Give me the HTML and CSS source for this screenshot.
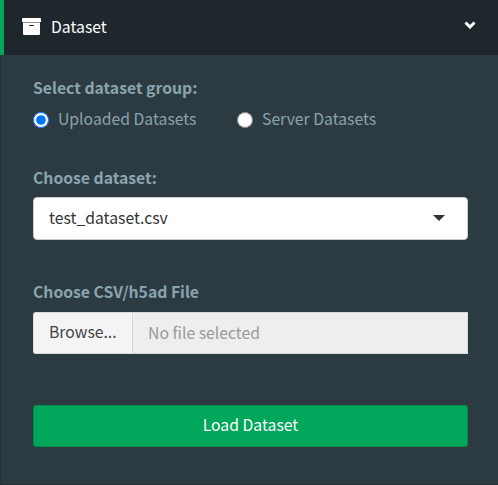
FILE: index.html
```html
<!DOCTYPE html>
<html lang="en">
<head>
<meta charset="utf-8">
<title>Dataset</title>
<link rel="stylesheet" href="styles.css">
</head>
<body>
<aside class="sidebar">
  <header class="menu-header">
    <svg class="archive" viewBox="0 0 19 17" aria-hidden="true"><path d="M1 0H18Q19 0 19 1V4H0V1Q0 0 1 0ZM1 4.4H18V16Q18 17 17 17H2Q1 17 1 16ZM7.5 7Q7 7 7 7.5Q7 8 7.5 8H11.5Q12 8 12 7.5Q12 7 11.5 7Z"/></svg>
    <span class="menu-title">Dataset</span>
    <svg class="chevron" viewBox="0 0 12 8" aria-hidden="true"><path d="M1.5 1.5L6 6L10.5 1.5"/></svg>
  </header>
  <form class="panel">
    <div class="label">Select dataset group:</div>
    <div class="radios">
      <label class="radio"><input type="radio" name="group" checked><span>Uploaded Datasets</span></label>
      <label class="radio"><input type="radio" name="group"><span>Server Datasets</span></label>
    </div>
    <div class="label choose">Choose dataset:</div>
    <div class="select"><span>test_dataset.csv</span><i class="caret"></i></div>
    <div class="label file-label">Choose CSV/h5ad File</div>
    <div class="file"><span class="browse">Browse...</span><span class="filename">No file selected</span></div>
    <button class="load" type="button">Load Dataset</button>
  </form>
</aside>
</body>
</html>
```
FILE: styles.css
```css
* { box-sizing: border-box; }
body { margin: 0; background: #2c3b41; font-family: "Noto Sans CJK SC", "Noto Sans", sans-serif; font-size: 15.75px; line-height: 24px; }
.sidebar { height: 485px; }
.menu-header { display: flex; align-items: center; height: 55px; padding: 0 22px 2px 18px; background: #1e282c; border-left: 4px solid #00a65a; color: #fff; }
.archive { width: 19px; height: 17px; fill: #fff; }
.menu-title { margin: 0 0 0 10px; }
.chevron { width: 12px; height: 8px; margin: 0 0 3px auto; fill: none; stroke: #fff; stroke-width: 3; }
.panel { height: 430px; padding: 21px 30px 0 32px; border-left: 1px solid #243136; border-bottom: 1px solid #243136; color: #8aa4af; }
.label { height: 24px; font-weight: 700; }
.radios { display: flex; height: 38px; align-items: center; }
.radio { display: flex; align-items: center; width: 204px; }
.radio input { width: 16px; height: 16px; margin: 1px 9px 0 0; }
.choose { margin-top: 28px; }
.select { display: flex; align-items: center; justify-content: space-between; height: 43px; margin-top: 7px; padding: 0 22px 1px 15px; border: 1px solid #ccc; background: #fff; color: #333; border-radius: 4px; }
.caret { border: 6px solid transparent; border-top-color: #333; border-bottom: 0; }
.file-label { margin-top: 40px; }
.file { display: flex; height: 42px; margin-top: 8px; line-height: 38px; }
.browse { width: 99px; padding-left: 15px; background: #f4f4f4; color: #444; border: 1px solid #ddd; border-right: 0; border-radius: 3px 0 0 3px; }
.filename { flex: 1; padding-left: 15px; line-height: 40px; background: #eee; border: 1px solid #d2d6de; color: #999; }
.load { display: block; width: 100%; height: 42px; margin-top: 51px; padding: 0 0 3px; border: 1px solid #008d4c; border-radius: 3px; background: #00a65a; color: #fff; font: inherit; }
```
